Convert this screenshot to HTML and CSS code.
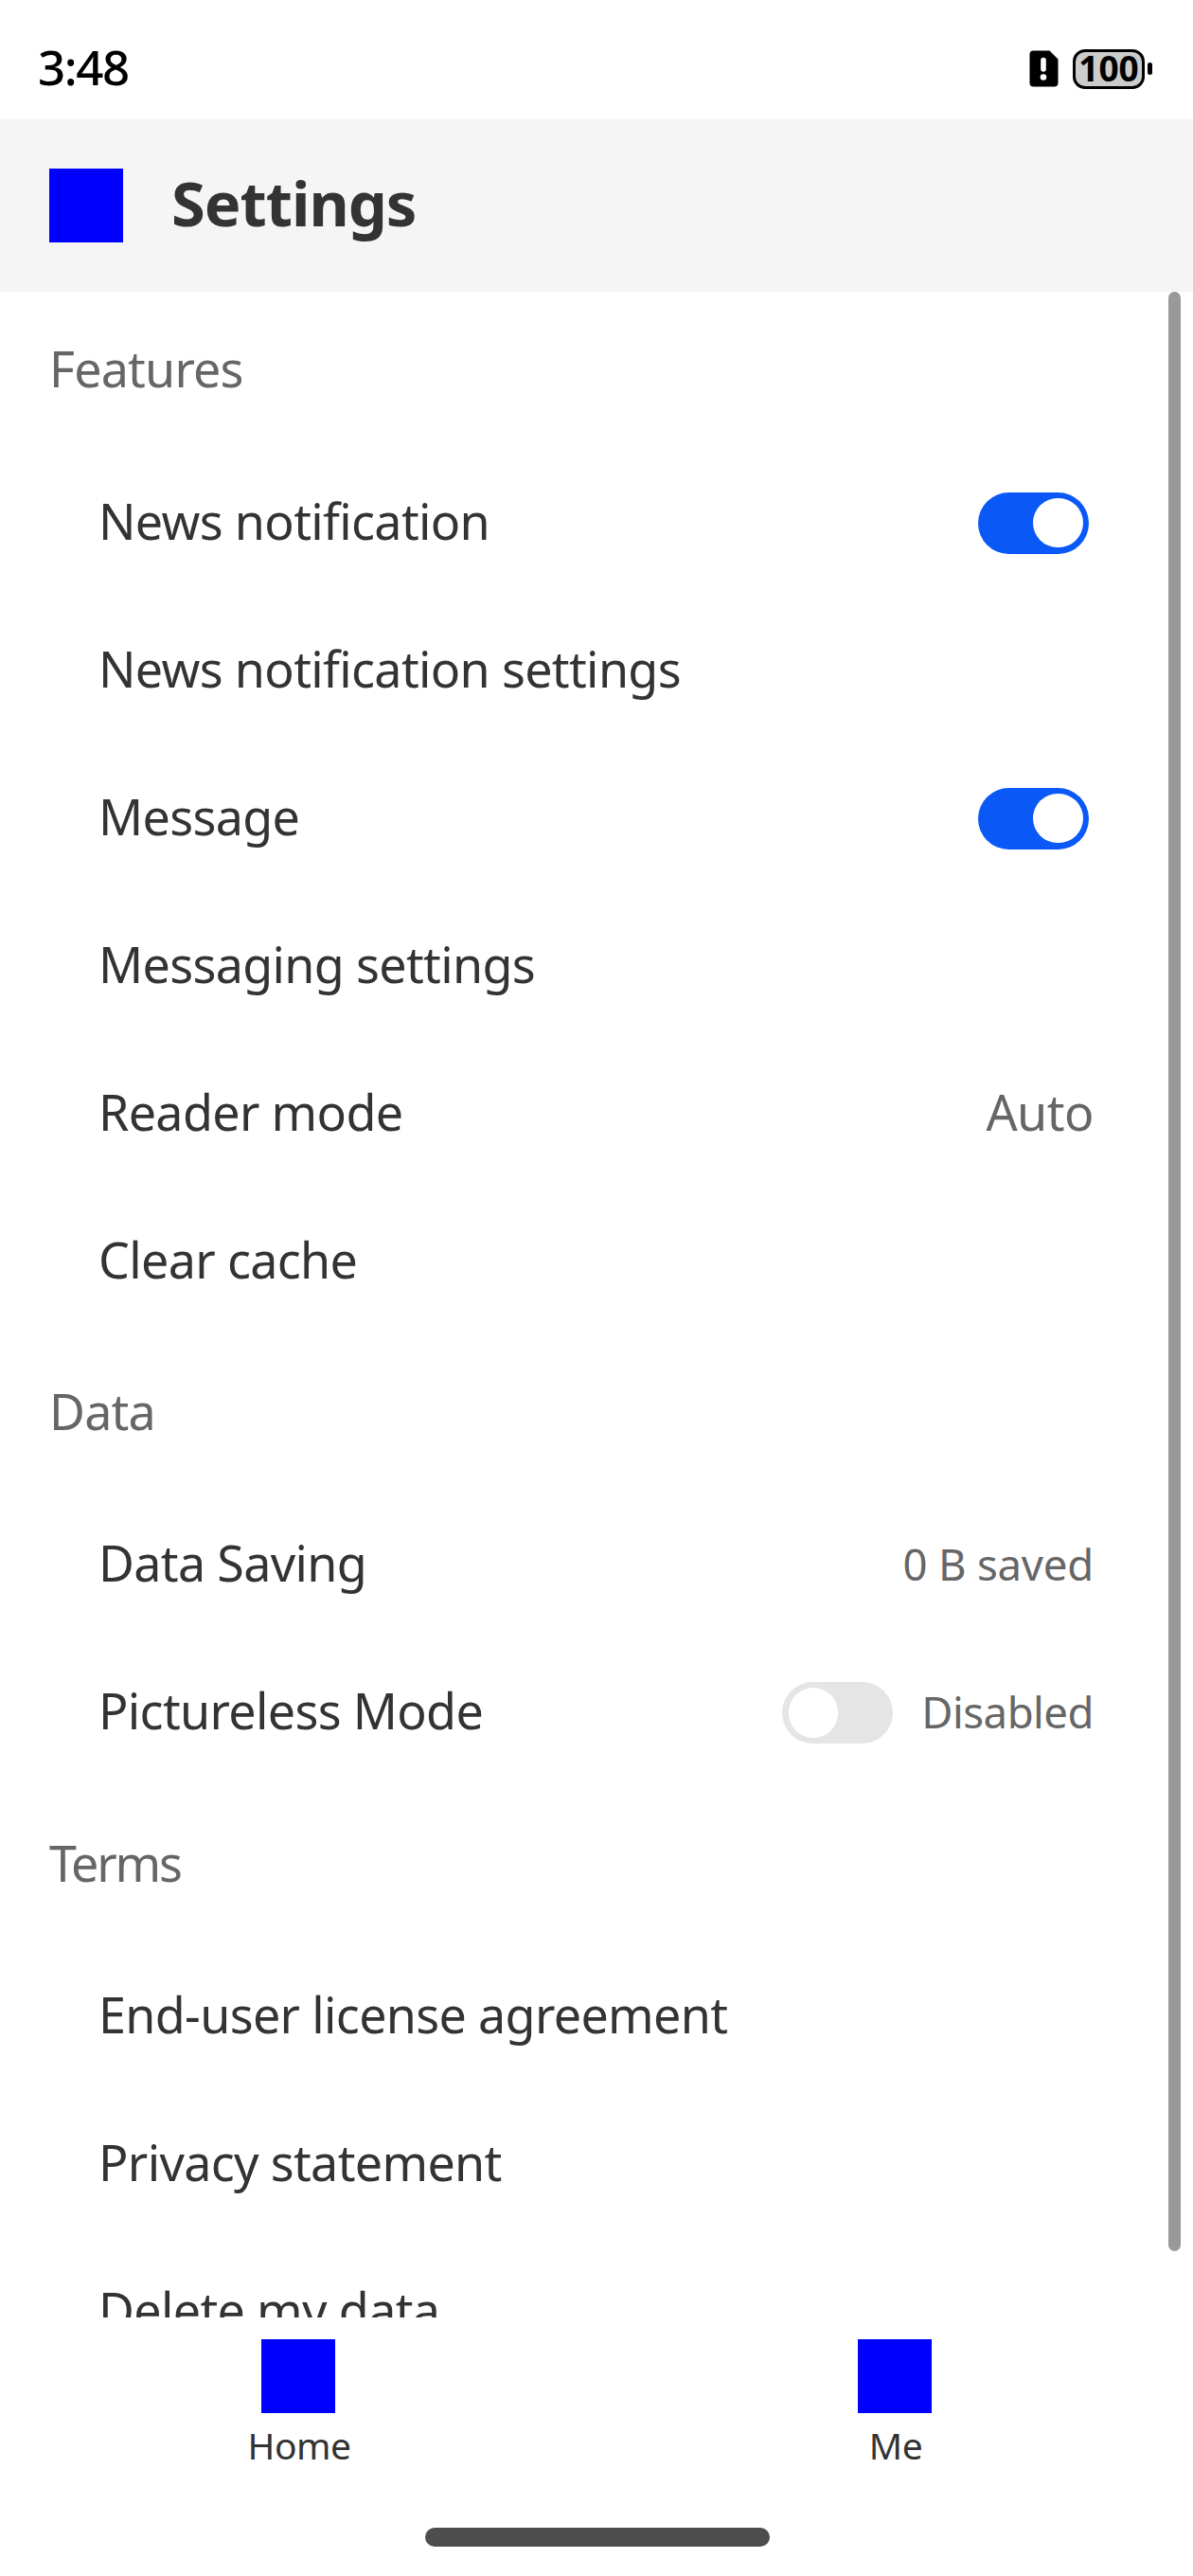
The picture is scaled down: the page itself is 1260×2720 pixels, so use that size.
FILE: index.html
```
<!DOCTYPE html>
<html lang="en">
<head>
<meta charset="utf-8">
<title>Settings</title>
<link rel="stylesheet" href="styles.css">
</head>
<body>
<div class="screen">
  <div class="status-bar">
    <span class="clock">3:48</span>
    <svg class="sim-icon" width="31" height="39" viewBox="0 0 31 39">
      <path d="M4.500 0.500H21.500L30.500 9.500V34.500a4 4 0 0 1-4 4H4.500A4 4 0 0 1 0.500 34.500V4.500A4 4 0 0 1 4.500 0.500Z" fill="#000"/>
      <path d="M15 10.500V20" stroke="#fff" stroke-width="5.600" stroke-linecap="round"/>
      <circle cx="15" cy="28.500" r="3.300" fill="#fff"/>
    </svg>
    <div class="battery"><span class="battery-level">100</span></div>
    <span class="battery-tip"></span>
  </div>

  <header class="title-bar">
    <span class="icon-box"></span>
    <h1 class="title">Settings</h1>
  </header>

  <main class="content">
    <h2 class="section">Features</h2>
    <div class="row"><span class="label">News notification</span><span class="toggle toggle-on"></span></div>
    <div class="row"><span class="label">News notification settings</span></div>
    <div class="row"><span class="label">Message</span><span class="toggle toggle-on"></span></div>
    <div class="row"><span class="label">Messaging settings</span></div>
    <div class="row"><span class="label">Reader mode</span><span class="value value-large">Auto</span></div>
    <div class="row"><span class="label">Clear cache</span></div>

    <h2 class="section section-data">Data</h2>
    <div class="row"><span class="label">Data Saving</span><span class="value value-saved">0 B saved</span></div>
    <div class="row"><span class="label">Pictureless Mode</span><span class="toggle"></span><span class="value">Disabled</span></div>

    <h2 class="section section-terms">Terms</h2>
    <div class="row"><span class="label">End-user license agreement</span></div>
    <div class="row"><span class="label">Privacy statement</span></div>
    <div class="row"><span class="label">Delete my data</span></div>
    <span class="scrollbar"></span>
  </main>

  <nav class="tabs">
    <div class="tab"><span class="icon-box"></span><span class="tab-label">Home</span></div>
    <div class="tab"><span class="icon-box"></span><span class="tab-label">Me</span></div>
  </nav>
  <div class="gesture-area"><span class="gesture-bar"></span></div>
</div>
</body>
</html>
```
FILE: styles.css
```
* { box-sizing: border-box; }

body {
  margin: 0;
  background: #fff;
  font-family: "Noto Sans", sans-serif;
  color: #333;
}

.screen {
  display: flex;
  flex-direction: column;
  width: 1260px;
  height: 2720px;
  overflow: hidden;
}

/* Status bar */
.status-bar {
  display: flex;
  align-items: center;
  flex: none;
  height: 126px;
  padding: 19px 43px 0 40px;
  color: #000;
}

.clock {
  flex: 1;
  padding-bottom: 5px;
  font-size: 51px;
  font-weight: 500;
  line-height: 60px;
  letter-spacing: -1.4px;
}

.sim-icon { display: block; margin-right: 15px; }

.battery {
  display: flex;
  align-items: center;
  justify-content: center;
  width: 76px;
  height: 42px;
  border: 3.5px solid #000;
  border-radius: 13px;
  background: #ccc;
}

.battery-level {
  padding-bottom: 2px;
  font-size: 37px;
  font-weight: 700;
  line-height: 34px;
}

.battery-tip {
  width: 5px;
  height: 13px;
  margin-left: 3px;
  border-radius: 3px;
  background: #000;
}

/* Title bar */
.title-bar {
  display: flex;
  align-items: center;
  flex: none;
  gap: 51px;
  height: 182px;
  padding-left: 52px;
  background: #f5f5f5;
}

.icon-box {
  display: block;
  flex: none;
  width: 78px;
  height: 78px;
  background: #00f;
}

.title {
  margin: 0;
  padding-bottom: 6px;
  font-size: 65px;
  line-height: 80px;
  letter-spacing: -1px;
}

/* Settings list */
.content {
  position: relative;
  flex: none;
  height: 2139px;
  overflow: hidden;
}

.section {
  height: 166px;
  margin: 0;
  padding: 1px 0 6px 52px;
  font-size: 52px;
  font-weight: 400;
  line-height: 159px;
  letter-spacing: -0.8px;
  color: #666;
}

.section-data {
  height: 164.5px;
  padding-top: 0;
}

.section-terms {
  height: 165px;
  padding-top: 0;
  letter-spacing: -2.2px;
}

.row {
  display: flex;
  align-items: center;
  height: 156px;
  padding: 0 104px;
}

.label {
  flex: 1;
  padding-bottom: 5px;
  font-size: 52px;
  line-height: 70px;
  letter-spacing: -0.65px;
}

.value {
  margin-right: 1px;
  padding-bottom: 3px;
  font-size: 45.5px;
  line-height: 60px;
  letter-spacing: -0.5px;
  color: #666;
}

.value-large {
  padding-bottom: 5px;
  font-size: 52px;
  line-height: 70px;
}

.value-saved { letter-spacing: -0.2px; }

.toggle {
  display: flex;
  width: 117px;
  height: 65px;
  margin-right: 6px;
  padding: 6.25px;
  border-radius: 33px;
  background: #e5e5e5;
}

.toggle::before {
  content: "";
  width: 52.5px;
  height: 52.5px;
  border-radius: 50%;
  background: #fff;
}

.toggle-on {
  justify-content: flex-end;
  background: #0a59f7;
}

.toggle + .value { margin-left: 24px; }

.scrollbar {
  position: absolute;
  top: 0;
  right: 13px;
  width: 13px;
  height: 2069px;
  border-radius: 7px;
  background: #999;
}

/* Bottom tabs */
.tabs {
  display: flex;
  flex: none;
  height: 182px;
  padding-top: 23px;
}

.tab {
  display: flex;
  flex: 1;
  flex-direction: column;
  align-items: center;
  gap: 9px;
}

.tab-label {
  padding-left: 2px;
  font-size: 39px;
  line-height: 50px;
  letter-spacing: -0.5px;
}

.gesture-area {
  display: flex;
  justify-content: center;
  padding: 40px 0 0 2px;
}

.gesture-bar {
  width: 364px;
  height: 20px;
  border-radius: 10px;
  background: #4d4d4d;
}
```
